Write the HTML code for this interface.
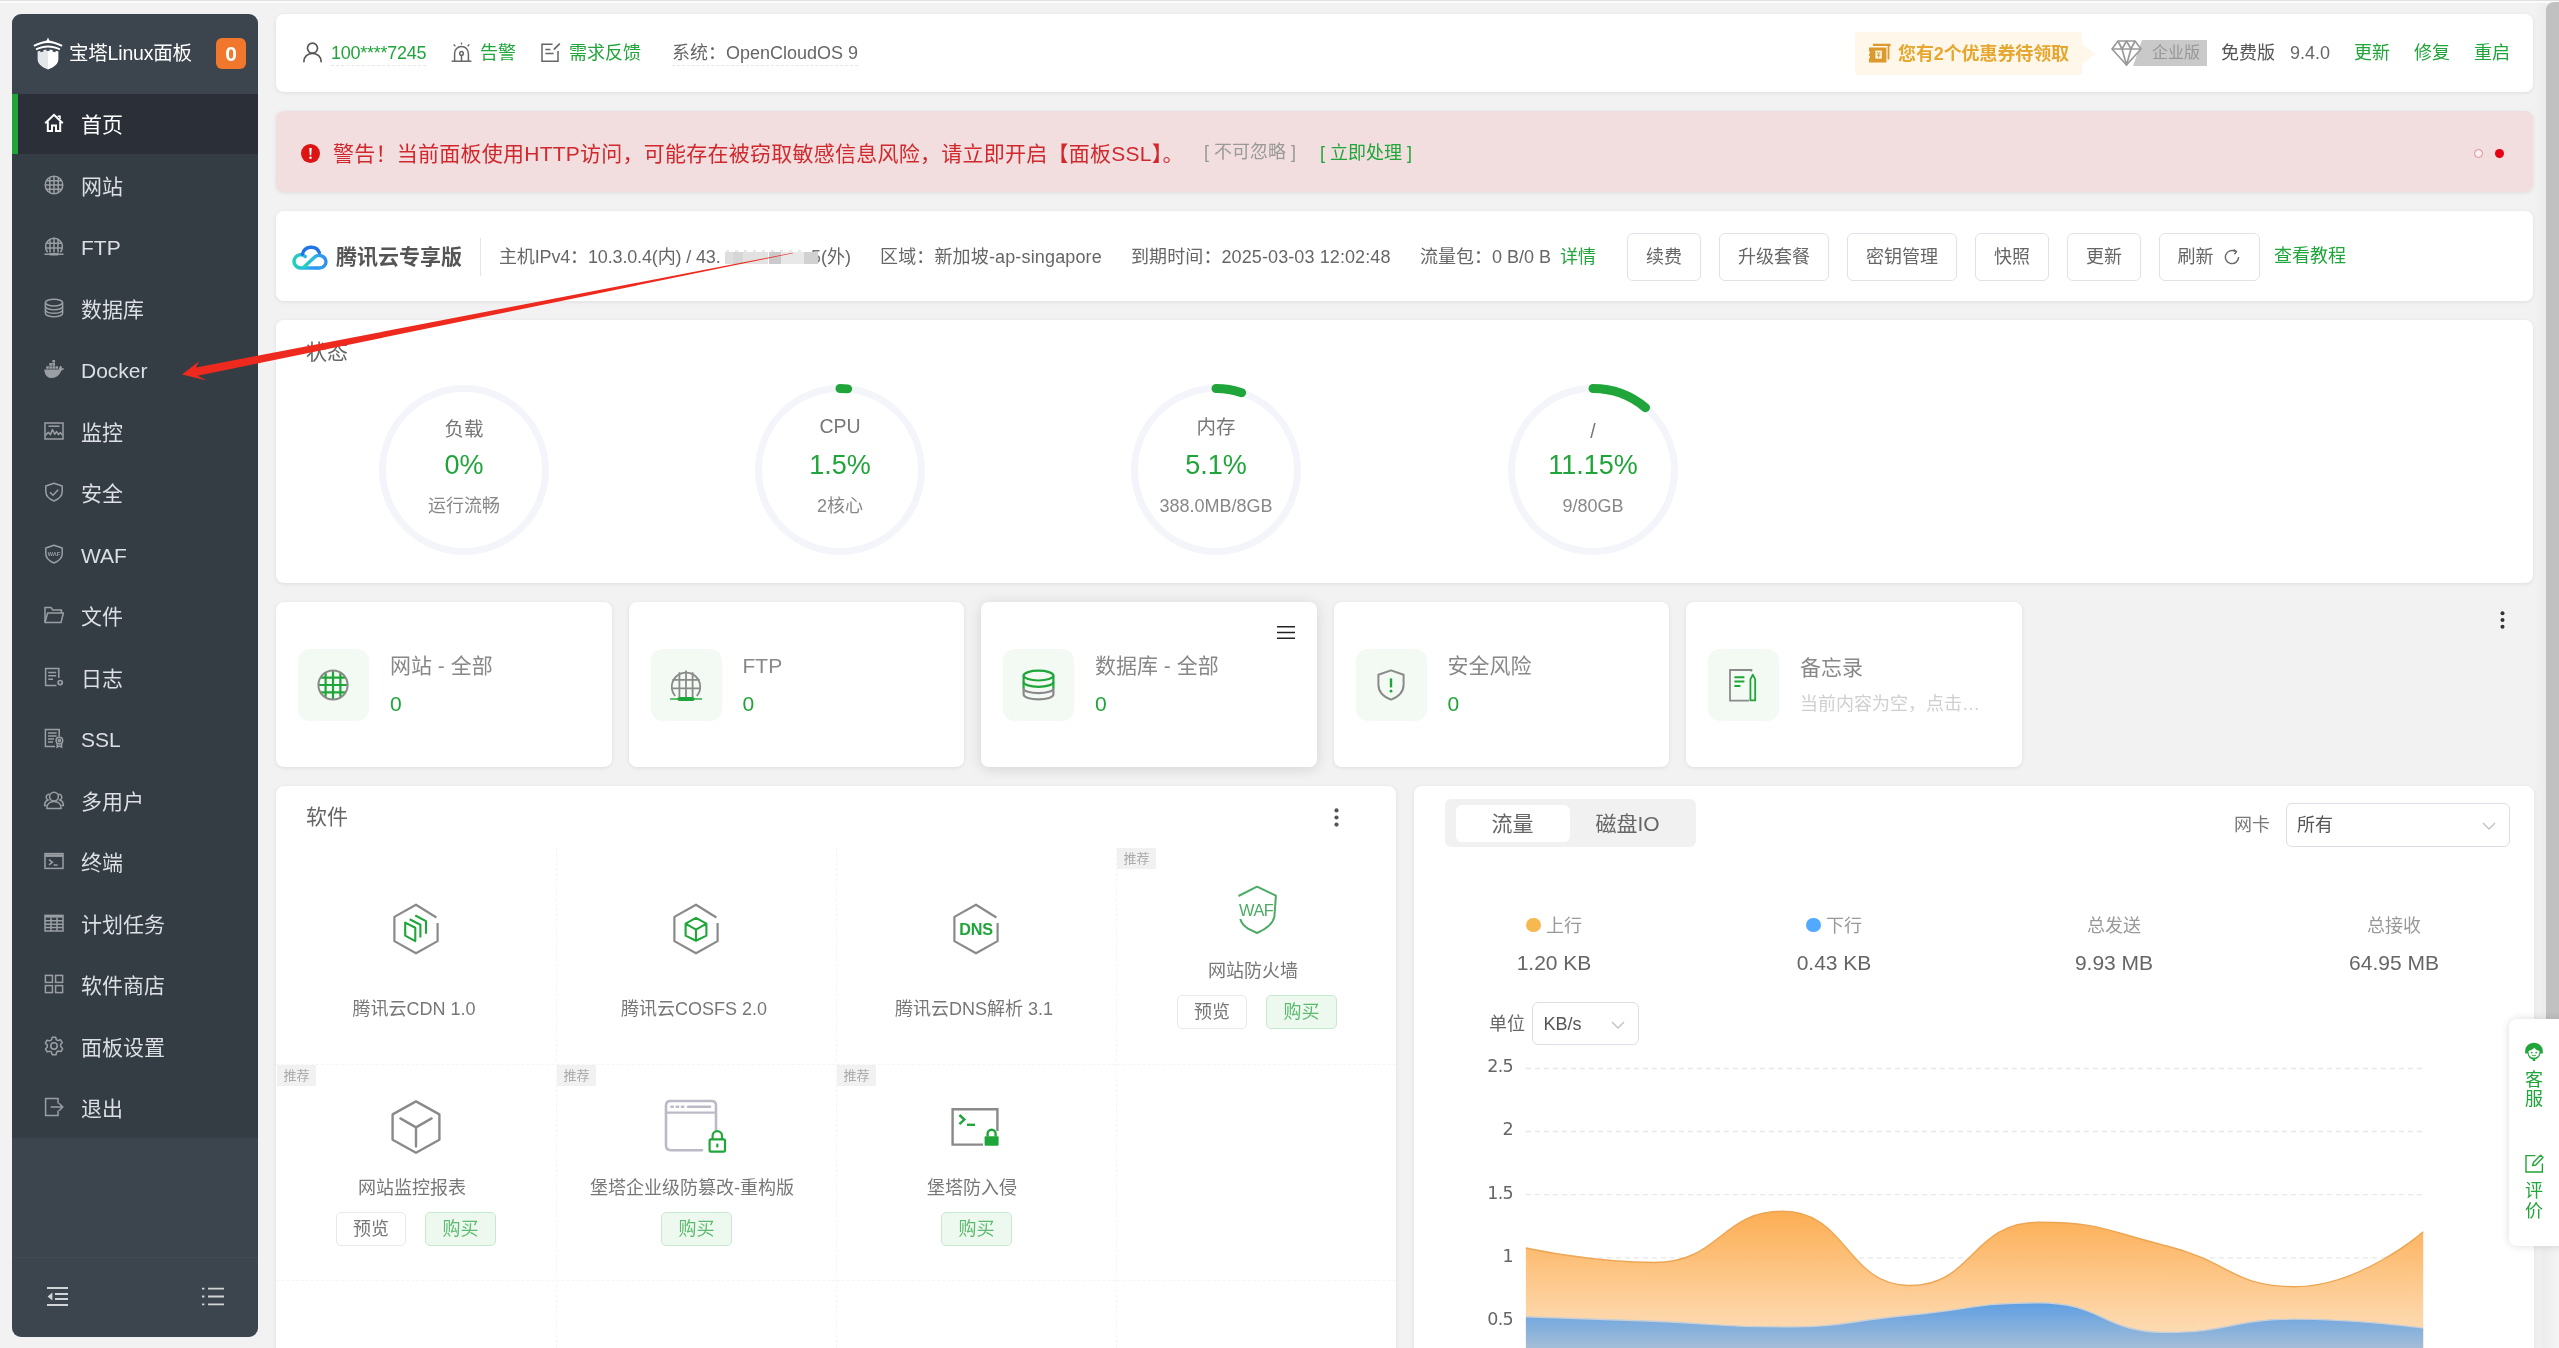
<!DOCTYPE html>
<html lang="zh-CN">
<head>
<meta charset="utf-8">
<title>宝塔Linux面板</title>
<style>
*{box-sizing:border-box;margin:0;padding:0}
html,body{width:2559px;height:1348px;overflow:hidden}
body{position:relative;background:#f2f2f2;font-family:"Liberation Sans","Noto Sans CJK SC",sans-serif;font-size:18px;color:#666;-webkit-font-smoothing:antialiased}
.abs{position:absolute}
.t{position:absolute;white-space:nowrap;line-height:1}
.g{color:#20a53a}
svg{position:absolute;overflow:visible}
.card{position:absolute;background:#fff;border-radius:8px;box-shadow:0 1px 4px rgba(0,0,0,.085)}
/* top edge */
#topline{left:0;top:0;width:2559px;height:3px;background:linear-gradient(#dfdfdf 0,#dfdfdf 1px,#fcfcfc 1px,#fcfcfc 2.4px,#f2f2f2 3px)}
/* scrollbar */
#sbtrack{left:2534px;top:3px;width:25px;height:1345px;background:linear-gradient(90deg,#f2f2f2,#ededed 40%,#f4f4f4)}
#sbthumb{left:2546px;top:2px;width:14px;height:1030px;background:#c1c1c1;border-radius:8px 0 0 8px}
/* sidebar */
#side{left:12px;top:14px;width:246px;height:1323px;background:#3c444d;border-radius:9px;overflow:hidden}
#menu{left:0;top:80px;width:246px;height:1044px;background:#353d44}
.mi{position:absolute;left:0;width:246px;height:60px}
.mi.on{background:#2b3038}
.mi.on:before{content:"";position:absolute;left:0;top:0;width:6px;height:60px;background:#20a53a}
.mi span{position:absolute;left:69px;top:0;line-height:61px;font-size:21px;color:#dcdfe3;white-space:nowrap}
.mi.on span{color:#fff}
.mi svg{left:32px;top:19px;width:20px;height:20px;fill:none;stroke:#9a9fa4;stroke-width:1.5}
.mi.on svg{stroke:#fff}
.btn{border:1px solid #e0e2e7;border-radius:6px;background:#fff;color:#666;font-size:18px;line-height:45px;text-align:center;white-space:nowrap}
</style>
</head>
<body>
<div id="root" style="position:absolute;left:0;top:0;width:2559px;height:1348px;will-change:transform;">
<div class="abs" id="topline"></div>
<div class="abs" id="sbtrack"></div>
<div class="abs" id="sbthumb"></div>

<!-- SIDEBAR -->
<div class="abs" id="side">
  <!--SIDE_HEAD-->
<svg id="logo" style="left:21px;top:23px;width:30px;height:33px" viewBox="0 0 30 33">
<path d="M15 0.5L16.3 3.4C20.5 4.2 25 5.6 29.6 8L28.6 9.8C24 7.6 19.4 6.3 15 6.1C10.6 6.3 6 7.6 1.4 9.8L0.4 8C5 5.6 9.5 4.2 13.7 3.4Z" fill="#fff"/>
<path d="M2.6 11.6C7 9.6 11 8.6 15 8.5C19 8.6 23 9.6 27.4 11.6L26.6 13.2C22.6 11.5 18.8 10.6 15 10.5C11.2 10.6 7.4 11.5 3.4 13.2Z" fill="#fff"/>
<path d="M4.6 14.6L7.4 13.8V15.2L10.4 14.4V13L13.4 12.5V14L15 13.8V32.4C9 30.4 4.6 27 4.6 22Z" fill="#e4e7ea"/>
<path d="M25.4 14.6L22.6 13.8V15.2L19.6 14.4V13L16.6 12.5V14L15 13.8V32.4C21 30.4 25.4 27 25.4 22Z" fill="#fff"/>
</svg>
<div class="t" style="left:57px;top:28px;font-size:19.5px;color:#fff;line-height:22px;letter-spacing:-0.2px">宝塔Linux面板</div>
<div class="abs" style="left:204px;top:24px;width:30px;height:31px;border-radius:6px;background:#f0772b;color:#fff;font-weight:bold;font-size:21px;line-height:31px;text-align:center">0</div>
<!--/SIDE_HEAD-->
  <div class="abs" id="menu">
  <!--MENU-->
<div class="mi on" style="top:0.0px"><svg viewBox="0 0 20 20"><path d="M1.2 10.2 L10 1.8 L18.8 10.2" stroke-width="2"/><path d="M3.8 8.5 V18 H8 V12.6 H12 V18 H16.2 V8.5" stroke-width="2"/><path d="M13.6 3.2 H16 V6" stroke-width="1.6"/></svg><span>首页</span></div>
<div class="mi" style="top:61.5px"><svg viewBox="0 0 20 20"><circle cx="10" cy="10" r="8.8"/><path d="M10 1.2V18.8M5.8 2.3V17.7M14.2 2.3V17.7M1.2 10H18.8M2.3 5.8H17.7M2.3 14.2H17.7"/></svg><span>网站</span></div>
<div class="mi" style="top:123.0px"><svg viewBox="0 0 20 20"><path d="M3.6 16.2 A8.4 8.4 0 1 1 16.4 16.2"/><path d="M10 1.6V16.5M6 2.8V16.5M14 2.8V16.5M1.8 7.2H18.2M1.6 12H18.4"/><path d="M0.5 18.2H19.5"/><path d="M6.5 18.2H13.5" stroke-width="2.6" stroke-linecap="round"/></svg><span>FTP</span></div>
<div class="mi" style="top:184.5px"><svg viewBox="0 0 20 20"><ellipse cx="10" cy="4.6" rx="8.6" ry="3.3"/><path d="M1.4 4.6V15.4C1.4 17.2 5.2 18.7 10 18.7S18.6 17.2 18.6 15.4V4.6"/><path d="M1.4 8.4C1.4 10.2 5.2 11.7 10 11.7S18.6 10.2 18.6 8.4M1.4 12C1.4 13.8 5.2 15.3 10 15.3S18.6 13.8 18.6 12"/></svg><span>数据库</span></div>
<div class="mi" style="top:246.0px"><svg viewBox="0 0 20 20"><path d="M0.4 10.4H14.8C15.2 8.6 15.8 7.4 16.8 6.6C17.6 7.4 18 8.4 18 9.4C18.8 9.1 19.6 9.2 20 9.6C19.5 11 18.4 11.6 17.2 11.6C15.8 16.2 12.4 19 7.8 19C3.4 19 0.4 15.8 0.4 10.4Z M2.2 7.2H4.8V9.8H2.2Z M5.3 7.2H7.9V9.8H5.3Z M8.4 7.2H11V9.8H8.4Z M11.5 7.2H14.1V9.8H11.5Z M5.3 4.1H7.9V6.7H5.3Z M8.4 4.1H11V6.7H8.4Z M8.4 1H11V3.6H8.4Z" fill="#9a9fa4" stroke="none"/></svg><span>Docker</span></div>
<div class="mi" style="top:307.5px"><svg viewBox="0 0 20 20"><rect x="1" y="2" width="18" height="16"/><path d="M4.5 5.2H15.5"/><path d="M1.4 14.6L4.2 11.2L6.4 13.6L8.4 8.6L10.8 13.2L12.6 10.6L14.6 13.6L16.4 11.6L18.6 14.4" stroke-linejoin="round"/></svg><span>监控</span></div>
<div class="mi" style="top:369.0px"><svg viewBox="0 0 20 20"><path d="M10 1.2L18.2 4V9.6C18.2 14 14.8 17.2 10 19C5.2 17.2 1.8 14 1.8 9.6V4Z" stroke-linejoin="round"/><path d="M6 10.2L9 13.2L14.2 7.8"/></svg><span>安全</span></div>
<div class="mi" style="top:430.5px"><svg viewBox="0 0 20 20"><path d="M10 1.2L18.2 4V9.6C18.2 14 14.8 17.2 10 19C5.2 17.2 1.8 14 1.8 9.6V4Z" stroke-linejoin="round"/><text x="10" y="11.6" text-anchor="middle" font-size="5.6" font-weight="bold" fill="#9a9fa4" stroke="none" font-family="Liberation Sans,sans-serif">WAF</text></svg><span>WAF</span></div>
<div class="mi" style="top:492.0px"><svg viewBox="0 0 20 20"><path d="M1 17.6V2.4H7L8.6 5H17.4V8"/><path d="M1 17.6L3.6 8H19.4L17 17.6Z" stroke-linejoin="round"/></svg><span>文件</span></div>
<div class="mi" style="top:553.5px"><svg viewBox="0 0 20 20"><path d="M14.8 11V1.6H1.6V18.4H12.4"/><path d="M4.2 5.4H12.2M4.2 8.8H12.2M4.2 12.2H9"/><circle cx="16.2" cy="15.6" r="2.1" stroke-width="1.7"/></svg><span>日志</span></div>
<div class="mi" style="top:615.0px"><svg viewBox="0 0 20 20"><path d="M15.2 8.6V1.6H1.4V18.4H11"/><path d="M4 5H12.6M4 8H12.6M4 11H10M4 14H9"/><circle cx="15.4" cy="12.6" r="3.3"/><circle cx="15.4" cy="12.6" r="1.1"/><path d="M13.2 15.2V19.2L15.4 17.8L17.6 19.2V15.2"/></svg><span>SSL</span></div>
<div class="mi" style="top:676.5px"><svg viewBox="0 0 20 20"><circle cx="10" cy="6.6" r="4.4"/><path d="M2.8 18.4C2.8 14.2 5.8 11.6 10 11.6S17.2 14.2 17.2 18.4Z" stroke-linejoin="round"/><path d="M5.6 4.2C3.6 4 2.2 5.4 2.2 7.2C2.2 8.6 3 9.6 4 10C1.8 10.8 0.6 12.8 0.6 15.4H2.6M14.4 4.2C16.4 4 17.8 5.4 17.8 7.2C17.8 8.6 17 9.6 16 10C18.2 10.8 19.4 12.8 19.4 15.4H17.4"/></svg><span>多用户</span></div>
<div class="mi" style="top:738.0px"><svg viewBox="0 0 20 20"><rect x="1" y="2.6" width="18" height="14.8"/><path d="M1 4.6H19" stroke-width="2.6"/><path d="M5 8.6L8.4 11.2L5 13.8M9.6 14H13.6"/></svg><span>终端</span></div>
<div class="mi" style="top:799.5px"><svg viewBox="0 0 20 20"><rect x="1" y="2.4" width="18" height="15.6"/><path d="M1 3.4H19" stroke-width="2.4"/><path d="M1 7.8H19M1 11.2H19M1 14.6H19M7 4.6V18M13 4.6V18"/></svg><span>计划任务</span></div>
<div class="mi" style="top:861.0px"><svg viewBox="0 0 20 20"><rect x="1.4" y="1.4" width="7" height="7"/><rect x="11.6" y="1.4" width="7" height="7"/><rect x="1.4" y="11.6" width="7" height="7"/><rect x="11.6" y="11.6" width="7" height="7"/></svg><span>软件商店</span></div>
<div class="mi" style="top:922.5px"><svg viewBox="0 0 20 20"><circle cx="10" cy="10" r="3.2"/><path d="M8.3 1.2H11.7L12.3 3.7L14 4.6L16.4 3.7L18.3 6.6L16.6 8.5V10.5L18.6 12.6L17 15.6L14.4 15L12.7 16L12 18.8H8.3L7.5 16.2L5.8 15.2L3.2 15.9L1.5 13L3.3 11.1V9.1L1.4 7.2L3 4.2L5.6 4.9L7.4 3.9Z" stroke-linejoin="round"/></svg><span>面板设置</span></div>
<div class="mi" style="top:984.0px"><svg viewBox="0 0 20 20"><path d="M14 6.4V1.6H1.6V18.4H14V13.6"/><path d="M6.6 10H18.6M15 6.2L18.8 10L15 13.8"/></svg><span>退出</span></div>
<!--/MENU-->
  </div>
  <!--SIDE_FOOT-->
<div class="abs" style="left:0;top:1243px;width:246px;height:1px;background:#424a53"></div>
<svg style="left:35px;top:1273px;width:21px;height:19px" viewBox="0 0 21 19" fill="none" stroke="#d2d5d8" stroke-width="1.8"><path d="M0 1H21M8 7H21M8 12H21M0 18H21"/><path d="M5.4 5.6V13.4L0.6 9.5Z" fill="#d2d5d8" stroke="none"/></svg>
<svg style="left:190px;top:1273px;width:22px;height:19px" viewBox="0 0 22 19" fill="none" stroke="#d2d5d8" stroke-width="1.8"><path d="M6 1.6H22M6 9.5H22M6 17.4H22"/><path d="M0 1.6H2.4M0 9.5H2.4M0 17.4H2.4"/></svg>
<!--/SIDE_FOOT-->
</div>

<!-- TOP BAR -->
<div class="card" id="topbar" style="left:276px;top:14px;width:2257px;height:78px">
<!--TOPBAR-->
<svg style="left:27px;top:28px;width:19px;height:20px" viewBox="0 0 19 20" fill="none" stroke="#555" stroke-width="1.7"><circle cx="9.5" cy="6.2" r="5"/><path d="M0.9 19.6C0.9 14.8 4.6 11.4 9.5 11.4S18.1 14.8 18.1 19.6" stroke-linecap="round"/></svg>
<div class="t g" style="left:55px;top:27.0px;font-size:18px;line-height:24px;letter-spacing:-0.25px;border-bottom:1px dashed #e6e6e6;height:25px;">100****7245</div>
<svg style="left:175px;top:28px;width:21px;height:20px" viewBox="0 0 21 20" fill="none" stroke="#666" stroke-width="1.5"><path d="M3.6 19V11.4C3.6 7.4 6.6 4.6 10.5 4.6S17.4 7.4 17.4 11.4V19"/><path d="M0.6 19.2H20.4"/><path d="M10.5 0.4V2.6M2.6 2.4L4.4 4.2M18.4 2.4L16.6 4.2" stroke-width="1.3"/><circle cx="10.5" cy="11.4" r="1.8"/><path d="M10.5 13.2V19"/></svg>
<div class="t g" style="left:204px;top:27.0px;font-size:18px;line-height:24px;">告警</div>
<svg style="left:265px;top:29px;width:20px;height:19px" viewBox="0 0 20 19" fill="none" stroke="#666" stroke-width="1.5"><path d="M11.6 1.2H1V18.2H17V8"/><path d="M4.4 6.4H9.4M4.4 10.6H12.6"/><path d="M12.8 6.6L18.8 0.6" stroke-width="1.7"/></svg>
<div class="t g" style="left:293px;top:27.0px;font-size:18px;line-height:24px;">需求反馈</div>
<div class="t " style="left:396px;top:27.0px;font-size:18px;line-height:24px;color:#666;border-bottom:1px dashed #e6e6e6;height:25px;">系统：OpenCloudOS 9</div>
<div class="abs" style="left:1579px;top:18px;width:227px;height:43px;background:#fef7ea;border-radius:3px"></div>
<svg style="left:1805px;top:28.5px;width:14px;height:22px" viewBox="0 0 14 22"><path d="M0 0L14 11L0 22Z" fill="#fef7ea"/></svg>
<svg style="left:1592px;top:29px;width:24px;height:20px" viewBox="0 0 24 20"><path d="M5 0.8H22.6V3.2H21.4V16.4H19.6V3H5Z" fill="#dc9a2e"/><path d="M1 4.4H18.4V19.4H1V15.6A1.8 1.8 0 0 0 1 12.4V11.2A1.8 1.8 0 0 0 1 8Z" fill="#dc9a2e"/><rect x="7.4" y="7.6" width="6.4" height="8" fill="#fef6e6"/><path d="M9 9L10.6 11L12.2 9M10.6 11V14.4M9 12.2H12.2" stroke="#dc9a2e" stroke-width="1" fill="none"/></svg>
<div class="t " style="left:1622px;top:27.5px;font-size:18px;line-height:24px;color:#e7a62e;font-weight:bold;letter-spacing:-0.1px">您有2个优惠券待领取</div>
<svg style="left:1857px;top:26px;width:74px;height:26px" viewBox="0 0 74 26"><path d="M9 0H74V26H0Z" fill="#c9c9c9"/></svg>
<svg style="left:1835px;top:26px;width:31px;height:26px" viewBox="0 0 31 26" fill="#fff" stroke="#9a9a9a" stroke-width="1.7" stroke-linejoin="round"><path d="M7 1H24L30 9L15.5 25L1 9Z"/><path d="M1 9H30M7 1L11 9L15.5 25L20 9L24 1M11 9L15.5 1L20 9" fill="none"/></svg>
<div class="t " style="left:1876px;top:27.0px;font-size:16px;line-height:24px;color:#979797">企业版</div>
<div class="t " style="left:1945px;top:27.0px;font-size:18px;line-height:24px;color:#555">免费版</div>
<div class="t " style="left:2014px;top:27.0px;font-size:18px;line-height:24px;color:#666">9.4.0</div>
<div class="t g" style="left:2078px;top:27.0px;font-size:18px;line-height:24px;">更新</div>
<div class="t g" style="left:2138px;top:27.0px;font-size:18px;line-height:24px;">修复</div>
<div class="t g" style="left:2198px;top:27.0px;font-size:18px;line-height:24px;">重启</div>
<!--/TOPBAR-->
</div>

<!-- WARNING -->
<div class="card" id="warn" style="left:276px;top:111px;width:2257px;height:81px;background:#f2dede">
<!--WARN-->
<svg style="left:25px;top:32.5px;width:19px;height:19px" viewBox="0 0 19 19"><circle cx="9.5" cy="9.5" r="9.5" fill="#dc1414"/><path d="M8.3 4H10.7L10.2 11.2H8.8Z" fill="#fff"/><circle cx="9.5" cy="13.8" r="1.25" fill="#fff"/></svg>
<div class="t " style="left:57px;top:28.5px;font-size:21px;line-height:28px;color:#d0282d;letter-spacing:0.25px">警告！当前面板使用HTTP访问，可能存在被窃取敏感信息风险，请立即开启【面板SSL】。</div>
<div class="t " style="left:928px;top:28.5px;font-size:18px;line-height:24px;color:#999;">[ 不可忽略 ]</div>
<div class="t g" style="left:1044px;top:29.5px;font-size:18px;line-height:24px;">[ 立即处理 ]</div>
<div class="abs" style="left:2198px;top:38px;width:9px;height:9px;border-radius:50%;border:1.5px solid #e08a8a;background:#fbf0f0"></div>
<div class="abs" style="left:2219px;top:38px;width:9px;height:9px;border-radius:50%;background:#e60012"></div>
<!--/WARN-->
</div>

<!-- TENCENT -->
<div class="card" id="tx" style="left:276px;top:211px;width:2257px;height:90px">
<!--TX-->
<svg style="left:16px;top:32px;width:36px;height:27px" viewBox="0 0 36 27" fill="none" stroke-width="3.4" stroke-linecap="round">
<defs><linearGradient id="txg" x1="0" y1="0" x2="1" y2="0"><stop offset="0" stop-color="#1fd3b6"/><stop offset="0.45" stop-color="#2cb4ea"/><stop offset="1" stop-color="#2f8df2"/></linearGradient></defs>
<path d="M26.6 25H8.6A6.6 6.6 0 1 1 13.2 13.6" stroke="url(#txg)"/>
<path d="M12.6 23.6L22.2 14.4A7 7 0 0 1 34 19A6.4 6.4 0 0 1 27.4 25" stroke="url(#txg)"/>
<path d="M10.4 11.2A9 9 0 0 1 27.4 9.6" stroke="#2274e6"/>
</svg>
<div class="t " style="left:60px;top:32.0px;font-size:21px;line-height:28px;color:#555;font-weight:bold;">腾讯云专享版</div>
<div class="abs" style="left:204px;top:27px;width:1px;height:38px;background:#e6e6e6"></div>
<div class="t " style="left:223px;top:34.0px;font-size:18px;line-height:24px;color:#666;letter-spacing:-0.15px">主机IPv4：10.3.0.4(内) / 43.</div>
<div class="t " style="left:535px;top:34.0px;font-size:18px;line-height:24px;color:#777;">5</div>
<div class="abs" style="left:449.4px;top:41px;width:7.3px;height:12px;background:#dedede"></div>
<div class="abs" style="left:456.7px;top:41px;width:10.6px;height:12px;background:#d6d6d6"></div>
<div class="abs" style="left:467.3px;top:41px;width:25.2px;height:12px;background:#e2e2e2"></div>
<div class="abs" style="left:492.5px;top:41px;width:12.0px;height:12px;background:#cacaca"></div>
<div class="abs" style="left:504.5px;top:41px;width:23.9px;height:12px;background:#e8e8e8"></div>
<div class="abs" style="left:528.4px;top:41px;width:13.3px;height:12px;background:#d1d1d1"></div>
<div class="abs" style="left:450px;top:39px;width:78px;height:2px;background:repeating-linear-gradient(90deg,#d8d8d8 0 3px,transparent 3px 9px);opacity:.6"></div>
<div class="t " style="left:545px;top:34.0px;font-size:18px;line-height:24px;color:#666;">(外)</div>
<div class="t " style="left:604px;top:34.0px;font-size:18px;line-height:24px;color:#666;letter-spacing:0.15px">区域：新加坡-ap-singapore</div>
<div class="t " style="left:855px;top:34.0px;font-size:18px;line-height:24px;color:#666;letter-spacing:0.1px">到期时间：2025-03-03 12:02:48</div>
<div class="t " style="left:1144px;top:34.0px;font-size:18px;line-height:24px;color:#666;">流量包：0 B/0 B</div>
<div class="t g" style="left:1284px;top:34.0px;font-size:18px;line-height:24px;">详情</div>
<div class="abs btn" style="left:1351px;top:22px;width:74px;height:48px;line-height:46px">续费</div>
<div class="abs btn" style="left:1443px;top:22px;width:110px;height:48px;line-height:46px">升级套餐</div>
<div class="abs btn" style="left:1571px;top:22px;width:110px;height:48px;line-height:46px">密钥管理</div>
<div class="abs btn" style="left:1699px;top:22px;width:74px;height:48px;line-height:46px">快照</div>
<div class="abs btn" style="left:1791px;top:22px;width:74px;height:48px;line-height:46px">更新</div>
<div class="abs btn" style="left:1883px;top:22px;width:101px;height:48px;line-height:46px;text-align:left;padding-left:17.5px">刷新</div>
<svg style="left:1948px;top:38px;width:16px;height:16px" viewBox="0 0 16 16" fill="none" stroke="#666" stroke-width="1.4"><path d="M14.6 8A6.6 6.6 0 1 1 11.4 2.4"/><path d="M9.6 0.6L12.6 2.6L10.4 5.4" stroke-linejoin="round"/></svg>
<div class="t g" style="left:1998px;top:32.5px;font-size:18px;line-height:24px;">查看教程</div>
<!--/TX-->
</div>

<!-- STATUS -->
<div class="card" id="status" style="left:276px;top:320px;width:2257px;height:263px">
<!--STATUS-->
<div class="t " style="left:30px;top:18.0px;font-size:21px;line-height:28px;color:#666;">状态</div>
<svg style="left:98px;top:59.5px;width:180px;height:180px" viewBox="-90 -90 180 180" fill="none"><circle r="81.5" stroke="#f4f5fa" stroke-width="7"/></svg>
<div class="t" style="left:88px;width:200px;text-align:center;top:96px;font-size:19.5px;line-height:26px;color:#777">负载</div>
<div class="t g" style="left:88px;width:200px;text-align:center;top:128px;font-size:27px;line-height:34px;">0%</div>
<div class="t" style="left:88px;width:200px;text-align:center;top:174px;font-size:18px;line-height:24px;color:#888">运行流畅</div>
<svg style="left:474px;top:59.5px;width:180px;height:180px" viewBox="-90 -90 180 180" fill="none"><circle r="81.5" stroke="#f4f5fa" stroke-width="7"/><path d="M0 -81.5A81.5 81.5 0 0 1 7.67 -81.14" stroke="#20a53a" stroke-width="9" stroke-linecap="round"/></svg>
<div class="t" style="left:464px;width:200px;text-align:center;top:93.39999999999998px;font-size:19.5px;line-height:26px;color:#777">CPU</div>
<div class="t g" style="left:464px;width:200px;text-align:center;top:128px;font-size:27px;line-height:34px;">1.5%</div>
<div class="t" style="left:464px;width:200px;text-align:center;top:174px;font-size:18px;line-height:24px;color:#888">2核心</div>
<svg style="left:850px;top:59.5px;width:180px;height:180px" viewBox="-90 -90 180 180" fill="none"><circle r="81.5" stroke="#f4f5fa" stroke-width="7"/><path d="M0 -81.5A81.5 81.5 0 0 1 25.67 -77.35" stroke="#20a53a" stroke-width="9" stroke-linecap="round"/></svg>
<div class="t" style="left:840px;width:200px;text-align:center;top:94px;font-size:19.5px;line-height:26px;color:#777">内存</div>
<div class="t g" style="left:840px;width:200px;text-align:center;top:128px;font-size:27px;line-height:34px;">5.1%</div>
<div class="t" style="left:840px;width:200px;text-align:center;top:174px;font-size:18px;line-height:24px;color:#888">388.0MB/8GB</div>
<svg style="left:1227px;top:59.5px;width:180px;height:180px" viewBox="-90 -90 180 180" fill="none"><circle r="81.5" stroke="#f4f5fa" stroke-width="7"/><path d="M0 -81.5A81.5 81.5 0 0 1 52.54 -62.30" stroke="#20a53a" stroke-width="9" stroke-linecap="round"/></svg>
<div class="t" style="left:1217px;width:200px;text-align:center;top:98px;font-size:19.5px;line-height:26px;color:#777">/</div>
<div class="t g" style="left:1217px;width:200px;text-align:center;top:128px;font-size:27px;line-height:34px;">11.15%</div>
<div class="t" style="left:1217px;width:200px;text-align:center;top:174px;font-size:18px;line-height:24px;color:#888">9/80GB</div>
<!--/STATUS-->
</div>

<!-- SMALL CARDS -->
<!--SMALL-->
<div class="card" style="left:276.0px;top:602px;width:335.5px;height:165px;"><div class="abs" style="left:22px;top:47px;width:71px;height:72px;border-radius:12px;background:#f2faf3"></div><svg style="left:41px;top:67px;width:32px;height:32px" viewBox="0 0 32 32" fill="none" stroke-width="2"><path d="M16 1.5V30.5M8.6 3V29M23.4 3V29M1.5 16H30.5M3 8.6H29M3 23.4H29" stroke="#20a53a" stroke-width="2.2"/><circle cx="16" cy="16" r="14.6" stroke="#8a8a8a"/></svg><div class="t" style="left:114px;top:50px;font-size:21px;line-height:28px;color:#888">网站 - 全部</div><div class="t g" style="left:114px;top:87.5px;font-size:21px;line-height:28px">0</div></div>
<div class="card" style="left:628.5px;top:602px;width:335.5px;height:165px;"><div class="abs" style="left:22px;top:47px;width:71px;height:72px;border-radius:12px;background:#f2faf3"></div><svg style="left:40px;top:67px;width:34px;height:32px" viewBox="0 0 34 32" fill="none" stroke="#8a8a8a" stroke-width="1.8"><path d="M6.2 27A14.2 14.2 0 1 1 27.8 27"/><path d="M17 1.6V28M10.4 3.2V28M23.6 3.2V28M3.4 10.8H30.6M2.8 19.4H31.2"/><path d="M1 30H33" stroke="#20a53a" stroke-width="1.4"/><path d="M10.4 30H23.6" stroke="#20a53a" stroke-width="4" stroke-linecap="round"/></svg><div class="t" style="left:114px;top:50px;font-size:21px;line-height:28px;color:#888">FTP</div><div class="t g" style="left:114px;top:87.5px;font-size:21px;line-height:28px">0</div></div>
<div class="card" style="left:981.0px;top:602px;width:335.5px;height:165px;box-shadow:0 2px 14px rgba(0,0,0,.13)"><div class="abs" style="left:22px;top:47px;width:71px;height:72px;border-radius:12px;background:#f2faf3"></div><svg style="left:41px;top:67px;width:33px;height:32px" viewBox="0 0 33 32" fill="none" stroke-width="2.2"><path d="M1.6 19.4V25.6C1.6 28.2 8.2 30.4 16.5 30.4S31.4 28.2 31.4 25.6V19.4" stroke="#8a8a8a"/><path d="M1.6 19.4C1.6 22 8.2 24.2 16.5 24.2S31.4 22 31.4 19.4" stroke="#8a8a8a"/><ellipse cx="16.5" cy="6.6" rx="14.9" ry="4.9" stroke="#20a53a"/><path d="M1.6 6.6V19.4M31.4 6.6V19.4" stroke="#20a53a"/><path d="M1.6 13C1.6 15.6 8.2 17.8 16.5 17.8S31.4 15.6 31.4 13" stroke="#20a53a"/></svg><div class="t" style="left:114px;top:50px;font-size:21px;line-height:28px;color:#888">数据库 - 全部</div><div class="t g" style="left:114px;top:87.5px;font-size:21px;line-height:28px">0</div><svg style="left:296px;top:23.5px;width:18px;height:13px" viewBox="0 0 18 13" stroke="#222" stroke-width="1.5"><path d="M0 0.8H18M0 6.5H18M0 12.2H18"/></svg></div>
<div class="card" style="left:1333.5px;top:602px;width:335.5px;height:165px;"><div class="abs" style="left:22px;top:47px;width:71px;height:72px;border-radius:12px;background:#f2faf3"></div><svg style="left:43px;top:67px;width:28px;height:32px" viewBox="0 0 28 32" fill="none" stroke-width="2"><path d="M14 1.4L26.6 5.8V15.4C26.6 22.6 21.4 27.8 14 30.6C6.6 27.8 1.4 22.6 1.4 15.4V5.8Z" stroke="#8a8a8a" stroke-linejoin="round"/><path d="M14 9.4V18.4" stroke="#20a53a" stroke-width="2.4"/><circle cx="14" cy="22.2" r="1.4" fill="#20a53a"/></svg><div class="t" style="left:114px;top:50px;font-size:21px;line-height:28px;color:#888">安全风险</div><div class="t g" style="left:114px;top:87.5px;font-size:21px;line-height:28px">0</div></div>
<div class="card" style="left:1686.0px;top:602px;width:335.5px;height:165px;"><div class="abs" style="left:22px;top:47px;width:71px;height:72px;border-radius:12px;background:#f2faf3"></div><svg style="left:43px;top:67px;width:28px;height:33px" viewBox="0 0 28 33" fill="none" stroke-width="1.8"><path d="M22.4 2.6V1H1V31.6H20" stroke="#8a8a8a"/><path d="M5.4 8.2H15.4M5.4 12.6H15.4M5.4 17H11.4" stroke="#20a53a" stroke-width="2"/><path d="M21.4 10.4L23.8 5.6L26.2 10.4V31.4H21.4Z" stroke="#20a53a" stroke-linejoin="round"/></svg><div class="t" style="left:114px;top:52px;font-size:21px;line-height:28px;color:#888">备忘录</div><div class="t" style="left:114px;top:90px;font-size:18px;line-height:24px;color:#cfcfcf">当前内容为空，点击…</div></div>
<svg style="left:2500px;top:611px;width:5px;height:18px" viewBox="0 0 5 18" fill="#333"><circle cx="2.5" cy="2.3" r="2"/><circle cx="2.5" cy="9" r="2"/><circle cx="2.5" cy="15.7" r="2"/></svg>
<!--/SMALL-->

<!-- SOFTWARE -->
<div class="card" id="soft" style="left:276px;top:786px;width:1120px;height:580px">
<!--SOFT-->
<div class="t" style="left:30px;top:16.5px;font-size:21px;line-height:28px;color:#666">软件</div>
<svg style="left:1057.5px;top:21.5px;width:5px;height:19px" viewBox="0 0 5 19" fill="#555"><circle cx="2.5" cy="2.4" r="2.1"/><circle cx="2.5" cy="9.5" r="2.1"/><circle cx="2.5" cy="16.6" r="2.1"/></svg>
<div class="abs" style="left:280px;top:62px;width:0;height:520px;border-left:1px dashed #f5f5f5"></div>
<div class="abs" style="left:560px;top:62px;width:0;height:520px;border-left:1px dashed #f5f5f5"></div>
<div class="abs" style="left:840px;top:62px;width:0;height:520px;border-left:1px dashed #f5f5f5"></div>
<div class="abs" style="left:0;top:278px;width:1120px;height:0;border-top:1px dashed #f5f5f5"></div>
<div class="abs" style="left:0;top:494px;width:1120px;height:0;border-top:1px dashed #f5f5f5"></div>
<svg style="left:110.19999999999999px;top:112.70000000000005px;width:60px;height:60px" viewBox="-30.0 -30.0 60 60" fill="none" stroke-linejoin="round"><path d="M20.4 -11.5L0 -24.3L-21.6 -12.15V12.15L0 24.3L21.6 12.15V-6.0" stroke="#8a8a8a" stroke-width="2.2"/><path d="M-10.8 -6.4L-0.7 -1.2V12.1L-10.8 6.6Z M-6.3 -9.7L4.4 -4.2V8.4 M-0.7 -13.5L10 -7.9V4.7" stroke="#20a53a" stroke-width="2.1"/></svg>
<div class="t" style="left:-2px;width:280px;text-align:center;top:210.5px;font-size:18px;line-height:24px;color:#777">腾讯云CDN 1.0</div>
<svg style="left:390.20000000000005px;top:112.70000000000005px;width:60px;height:60px" viewBox="-30.0 -30.0 60 60" fill="none" stroke-linejoin="round"><path d="M20.4 -11.5L0 -24.3L-21.6 -12.15V12.15L0 24.3L21.6 12.15V-6.0" stroke="#8a8a8a" stroke-width="2.2"/><path d="M0 -11.2L10.4 -5.3V6.6L0 11.8L-10.4 6.6V-5.3Z M-10.4 -5.3L0 0.6L10.4 -5.3M0 0.6V11.8" stroke="#20a53a" stroke-width="2.1"/></svg>
<div class="t" style="left:278px;width:280px;text-align:center;top:210.5px;font-size:18px;line-height:24px;color:#777">腾讯云COSFS 2.0</div>
<svg style="left:670.2px;top:112.70000000000005px;width:60px;height:60px" viewBox="-30.0 -30.0 60 60" fill="none" stroke-linejoin="round"><path d="M20.4 -11.5L0 -24.3L-21.6 -12.15V12.15L0 24.3L21.6 12.15V-6.0" stroke="#8a8a8a" stroke-width="2.2"/><text x="0" y="6" text-anchor="middle" font-size="16.2" font-weight="bold" fill="#20a53a" font-family="Liberation Sans,sans-serif" letter-spacing="-0.3">DNS</text></svg>
<div class="t" style="left:558px;width:280px;text-align:center;top:210.5px;font-size:18px;line-height:24px;color:#777">腾讯云DNS解析 3.1</div>
<div class="abs" style="left:841px;top:62px;width:39px;height:21px;background:#f1f1f1;color:#aaa;font-size:13px;line-height:21px;text-align:center;white-space:nowrap">推荐</div>
<svg style="left:951.3px;top:94.0px;width:60px;height:60px" viewBox="-30.0 -30.0 60 60" fill="none" stroke-linejoin="round"><path d="M-18.5 -14L0 -23.3L18.9 -14.4L17.4 6.4C16.4 12.6 10 18.6 0 23L-9 18.6C-13.6 15.6 -15.8 12.6 -16.7 9" stroke="#4dab65" stroke-width="2"/><text x="-0.8" y="5.8" text-anchor="middle" font-size="16.4" fill="#4dab65" font-family="Liberation Sans,sans-serif" letter-spacing="-0.5">WAF</text></svg>
<div class="t" style="left:837px;width:280px;text-align:center;top:172.5px;font-size:18px;line-height:24px;color:#777">网站防火墙</div>
<div class="abs btn" style="left:901px;top:209px;width:70px;height:34px;line-height:32px;border-radius:5px;color:#777;border-color:#e9e9e9">预览</div>
<div class="abs btn" style="left:990px;top:209px;width:71px;height:34px;line-height:32px;border-radius:5px;background:#edf9ef;border-color:#c9e9cf;color:#5dba70">购买</div>
<div class="abs" style="left:1px;top:279px;width:39px;height:21px;background:#f1f1f1;color:#aaa;font-size:13px;line-height:21px;text-align:center;white-space:nowrap">推荐</div>
<svg style="left:105.0px;top:306.0px;width:70px;height:70px" viewBox="-35.0 -35.0 70 70" fill="none" stroke-linejoin="round"><path d="M0 -25.6L23.4 -12.6V12.8L0 25.8L-23.4 12.8V-12.6Z" stroke="#8a8a8a" stroke-width="2.4"/><path d="M-15.6 -8.6L0 0.4L15.6 -8.6M0 0.4V19.4" stroke="#8a8a8a" stroke-width="2.4" stroke-linecap="round"/></svg>
<div class="t" style="left:-4px;width:280px;text-align:center;top:389.5px;font-size:18px;line-height:24px;color:#777">网站监控报表</div>
<div class="abs btn" style="left:60px;top:425.5px;width:70px;height:34px;line-height:32px;border-radius:5px;color:#777;border-color:#e9e9e9">预览</div>
<div class="abs btn" style="left:149px;top:425.5px;width:71px;height:34px;line-height:32px;border-radius:5px;background:#edf9ef;border-color:#c9e9cf;color:#5dba70">购买</div>
<div class="abs" style="left:281px;top:279px;width:39px;height:21px;background:#f1f1f1;color:#aaa;font-size:13px;line-height:21px;text-align:center;white-space:nowrap">推荐</div>
<svg style="left:380.0px;top:305.0px;width:70px;height:70px" viewBox="-35.0 -35.0 70 70" fill="none" stroke-linejoin="round"><path d="M25 4V-20.4Q25 -25 20.4 -25H-20.4Q-25 -25 -25 -20.4V19.6Q-25 24.2 -20.4 24.2H11" stroke="#bbbbc8" stroke-width="2.6" stroke-linecap="round"/><path d="M-25 -13.4H25" stroke="#bbbbc8" stroke-width="2.2"/><path d="M-19.6 -19.2H-18M-14.4 -19.2H-12.8M-9.2 -19.2H-7.6" stroke="#bbbbc8" stroke-width="2.4" stroke-linecap="round"/><path d="M-3 -19.2H19" stroke="#bbbbc8" stroke-width="2.4" stroke-linecap="round"/><rect x="18.6" y="13.4" width="15.4" height="12.2" rx="1.2" stroke="#20a53a" stroke-width="2.2"/><path d="M21.6 13.4V9.8A4.7 4.7 0 0 1 31 9.8V13.4" stroke="#20a53a" stroke-width="2.2"/><path d="M26.3 17.6V21.4" stroke="#20a53a" stroke-width="2.2"/></svg>
<div class="t" style="left:276px;width:280px;text-align:center;top:389.5px;font-size:18px;line-height:24px;color:#777">堡塔企业级防篡改-重构版</div>
<div class="abs btn" style="left:385px;top:425.5px;width:71px;height:34px;line-height:32px;border-radius:5px;background:#edf9ef;border-color:#c9e9cf;color:#5dba70">购买</div>
<div class="abs" style="left:561px;top:279px;width:39px;height:21px;background:#f1f1f1;color:#aaa;font-size:13px;line-height:21px;text-align:center;white-space:nowrap">推荐</div>
<svg style="left:664.0px;top:305.5px;width:70px;height:70px" viewBox="-35.0 -35.0 70 70" fill="none" stroke-linejoin="round"><path d="M22.4 4V-17.8H-22.4V17.6H8" stroke="#8a8a8a" stroke-width="2.4" stroke-linejoin="miter"/><path d="M-15.6 -12L-10.6 -7.4L-15.6 -2.8" stroke="#20a53a" stroke-width="2.4" stroke-linejoin="miter"/><path d="M-8 -2.2H0" stroke="#20a53a" stroke-width="2.4"/><rect x="9.6" y="9.2" width="14" height="9.6" rx="1" fill="#20a53a" stroke="none"/><path d="M12.6 9.6V6.8A4 4 0 0 1 20.6 6.8V9.6" stroke="#20a53a" stroke-width="2.4"/></svg>
<div class="t" style="left:556px;width:280px;text-align:center;top:389.5px;font-size:18px;line-height:24px;color:#777">堡塔防入侵</div>
<div class="abs btn" style="left:665px;top:425.5px;width:71px;height:34px;line-height:32px;border-radius:5px;background:#edf9ef;border-color:#c9e9cf;color:#5dba70">购买</div>
<!--/SOFT-->
</div>

<!-- TRAFFIC -->
<div class="card" id="net" style="left:1414px;top:786px;width:1120px;height:580px">
<!--NET-->
<div class="abs" style="left:30.5px;top:13px;width:251.5px;height:48px;border-radius:6px;background:#f1f1f1"></div>
<div class="abs" style="left:42px;top:19px;width:114px;height:36.5px;border-radius:6px;background:#fff"></div>
<div class="t " style="left:77.5px;top:24.0px;font-size:21px;line-height:28px;color:#666">流量</div>
<div class="t " style="left:181.5px;top:24.0px;font-size:21px;line-height:28px;color:#666">磁盘IO</div>
<div class="t " style="left:820px;top:27.0px;font-size:18px;line-height:24px;color:#777">网卡</div>
<div class="abs" style="left:871.5px;top:16.5px;width:224px;height:44px;border:1.5px solid #dcdfe6;border-radius:6px;background:#fff"></div>
<div class="t " style="left:883px;top:27.0px;font-size:18px;line-height:24px;color:#555">所有</div>
<svg style="left:1068px;top:35.5px;width:14px;height:8px" viewBox="0 0 14 8" fill="none" stroke="#c0c4cc" stroke-width="1.5"><path d="M1 1L7 7L13 1"/></svg>
<div class="abs" style="left:112px;top:131.5px;width:14.5px;height:14.5px;border-radius:50%;background:#f7b851"></div>
<div class="t " style="left:132px;top:127.5px;font-size:18px;line-height:24px;color:#999">上行</div>
<div class="abs" style="left:392px;top:131.5px;width:14.5px;height:14.5px;border-radius:50%;background:#52a9ff"></div>
<div class="t " style="left:412px;top:127.5px;font-size:18px;line-height:24px;color:#999">下行</div>
<div class="t" style="left:560px;width:280px;text-align:center;top:127.5px;font-size:18px;line-height:24px;color:#999">总发送</div>
<div class="t" style="left:840px;width:280px;text-align:center;top:127.5px;font-size:18px;line-height:24px;color:#999">总接收</div>
<div class="t" style="left:0px;width:280px;text-align:center;top:163.0px;font-size:21px;line-height:28px;color:#666">1.20 KB</div>
<div class="t" style="left:280px;width:280px;text-align:center;top:163.0px;font-size:21px;line-height:28px;color:#666">0.43 KB</div>
<div class="t" style="left:560px;width:280px;text-align:center;top:163.0px;font-size:21px;line-height:28px;color:#666">9.93 MB</div>
<div class="t" style="left:840px;width:280px;text-align:center;top:163.0px;font-size:21px;line-height:28px;color:#666">64.95 MB</div>
<div class="t " style="left:75px;top:226.0px;font-size:18px;line-height:24px;color:#666">单位</div>
<div class="abs" style="left:118px;top:215.5px;width:106.5px;height:43.5px;border:1.5px solid #dcdfe6;border-radius:6px;background:#fff"></div>
<div class="t " style="left:129.5px;top:226.0px;font-size:18px;line-height:24px;color:#555">KB/s</div>
<svg style="left:197px;top:234.5px;width:14px;height:8px" viewBox="0 0 14 8" fill="none" stroke="#c0c4cc" stroke-width="1.5"><path d="M1 1L7 7L13 1"/></svg>
<svg style="left:0;top:0;width:1119px;height:600px" viewBox="0 0 1119 600" fill="none"><defs><linearGradient id="go" x1="0" y1="425.0" x2="0" y2="598.0" gradientUnits="userSpaceOnUse"><stop offset="0" stop-color="#fcaa4c"/><stop offset="0.62" stop-color="#fdd5a6"/><stop offset="1" stop-color="#fee6cc"/></linearGradient><linearGradient id="gb" x1="0" y1="517.0" x2="0" y2="598.0" gradientUnits="userSpaceOnUse"><stop offset="0" stop-color="#5f9fe3"/><stop offset="0.55" stop-color="#a3bdd7"/><stop offset="1" stop-color="#d6d4cc"/></linearGradient></defs><path d="M111.9 282.5H1009.2" stroke="#e8e8e8" stroke-width="1.3" stroke-dasharray="5 4"/><path d="M111.9 345.5H1009.2" stroke="#e8e8e8" stroke-width="1.3" stroke-dasharray="5 4"/><path d="M111.9 408.7H1009.2" stroke="#e8e8e8" stroke-width="1.3" stroke-dasharray="5 4"/><path d="M111.9 471.8H1009.2" stroke="#e8e8e8" stroke-width="1.3" stroke-dasharray="5 4"/><path d="M111.9 535.0H1009.2" stroke="#e8e8e8" stroke-width="1.3" stroke-dasharray="5 4"/><path d="M111.9 462.0C111.9 462.0 178.2 476.5 240.1 476.5C306.4 476.5 306.4 425.3 368.3 425.3C434.6 425.3 431.2 499.5 496.5 499.5C559.4 499.5 557.6 436.3 624.7 436.3C685.8 436.3 689.8 444.2 752.9 460.0C817.9 476.4 818.1 500.7 881.0 500.7C946.3 500.7 1009.2 445.8 1009.2 445.8V598.5H111.9Z" fill="url(#go)" fill-opacity="0.96"/><path d="M111.9 462.0C111.9 462.0 178.2 476.5 240.1 476.5C306.4 476.5 306.4 425.3 368.3 425.3C434.6 425.3 431.2 499.5 496.5 499.5C559.4 499.5 557.6 436.3 624.7 436.3C685.8 436.3 689.8 444.2 752.9 460.0C817.9 476.4 818.1 500.7 881.0 500.7C946.3 500.7 1009.2 445.8 1009.2 445.8" stroke="#eea551" stroke-width="1.4"/><path d="M111.9 530.8C111.9 530.8 176.0 532.8 240.1 535.3C304.2 537.8 304.3 540.9 368.3 540.9C432.5 540.9 432.4 535.0 496.5 529.0C560.6 523.0 561.3 516.8 624.7 516.8C689.4 516.8 688.1 546.4 752.9 546.4C816.3 546.4 816.9 533.1 881.0 533.1C945.0 533.1 1009.2 542.1 1009.2 542.1V598.5H111.9Z" fill="url(#gb)"/><path d="M111.9 530.8C111.9 530.8 176.0 532.8 240.1 535.3C304.2 537.8 304.3 540.9 368.3 540.9C432.5 540.9 432.4 535.0 496.5 529.0C560.6 523.0 561.3 516.8 624.7 516.8C689.4 516.8 688.1 546.4 752.9 546.4C816.3 546.4 816.9 533.1 881.0 533.1C945.0 533.1 1009.2 542.1 1009.2 542.1" stroke="#c9cfd4" stroke-width="1.4"/></svg>
<div class="t" style="left:-1px;width:100px;text-align:right;top:268.29999999999995px;font-size:17.5px;line-height:24px;color:#666;font-family:'DejaVu Sans','Liberation Sans',sans-serif;letter-spacing:-0.7px">2.5</div>
<div class="t" style="left:-1px;width:100px;text-align:right;top:331.29999999999995px;font-size:17.5px;line-height:24px;color:#666;font-family:'DejaVu Sans','Liberation Sans',sans-serif;letter-spacing:-0.7px">2</div>
<div class="t" style="left:-1px;width:100px;text-align:right;top:394.5px;font-size:17.5px;line-height:24px;color:#666;font-family:'DejaVu Sans','Liberation Sans',sans-serif;letter-spacing:-0.7px">1.5</div>
<div class="t" style="left:-1px;width:100px;text-align:right;top:457.5999999999999px;font-size:17.5px;line-height:24px;color:#666;font-family:'DejaVu Sans','Liberation Sans',sans-serif;letter-spacing:-0.7px">1</div>
<div class="t" style="left:-1px;width:100px;text-align:right;top:520.8px;font-size:17.5px;line-height:24px;color:#666;font-family:'DejaVu Sans','Liberation Sans',sans-serif;letter-spacing:-0.7px">0.5</div>
<!--/NET-->
</div>

<!--FLOAT-->
<div class="abs" style="left:2509px;top:1018.5px;width:60px;height:227px;background:#fff;border-radius:8px;box-shadow:0 0 8px rgba(0,0,0,.14)"></div>
<svg style="left:2524px;top:1042px;width:20px;height:20px" viewBox="0 0 20 20"><path d="M10 0.8C4.8 0.8 1.2 4.4 1.2 9.2V11.6H3.6C3.8 14.6 6 17 9 17.8L8.6 19H11.4L11 17.4C14 16.6 16.2 14.4 16.4 11.6H18.8V9.2C18.8 4.4 15.2 0.8 10 0.8Z" fill="#20a53a"/><path d="M4.6 8.8C6.8 8.6 8.8 7.6 10.2 5.8C11.4 7.4 13.2 8.6 15.4 8.8V10.6C15.4 13.6 13.2 15.8 10 15.8S4.6 13.6 4.6 10.6Z" fill="#fff"/><circle cx="7.8" cy="10.6" r="0.9" fill="#20a53a"/><circle cx="12.2" cy="10.6" r="0.9" fill="#20a53a"/><path d="M8 13C9.2 14 10.8 14 12 13" stroke="#20a53a" stroke-width="0.9" fill="none"/></svg>
<div class="t g" style="left:2525px;top:1070.5px;font-size:18px;line-height:19.5px;width:18px;white-space:normal;text-align:center">客服</div>
<svg style="left:2525px;top:1154px;width:19px;height:19px" viewBox="0 0 19 19" fill="none" stroke="#20a53a" stroke-width="1.4"><path d="M10.4 1.6H1V18H17.4V9.6"/><path d="M7.6 11.6L8.4 8.6L15.6 1.2L18 3.6L10.8 11Z" stroke-linejoin="round"/></svg>
<div class="t g" style="left:2525px;top:1182px;font-size:18px;line-height:19.5px;width:18px;white-space:normal;text-align:center">评价</div>
<!--/FLOAT-->
<!--ARROW-->
<svg style="left:0;top:0;width:2559px;height:1348px;pointer-events:none" viewBox="0 0 2559 1348"><path d="M182.0 374.6L198.8 361.6L195.9 367.6L792.9 252.7L793.1 253.3L197.5 375.8L206.6 380.4Z" fill="#ee2a1f"/></svg>
<!--/ARROW-->
</div>
</body>
</html>
